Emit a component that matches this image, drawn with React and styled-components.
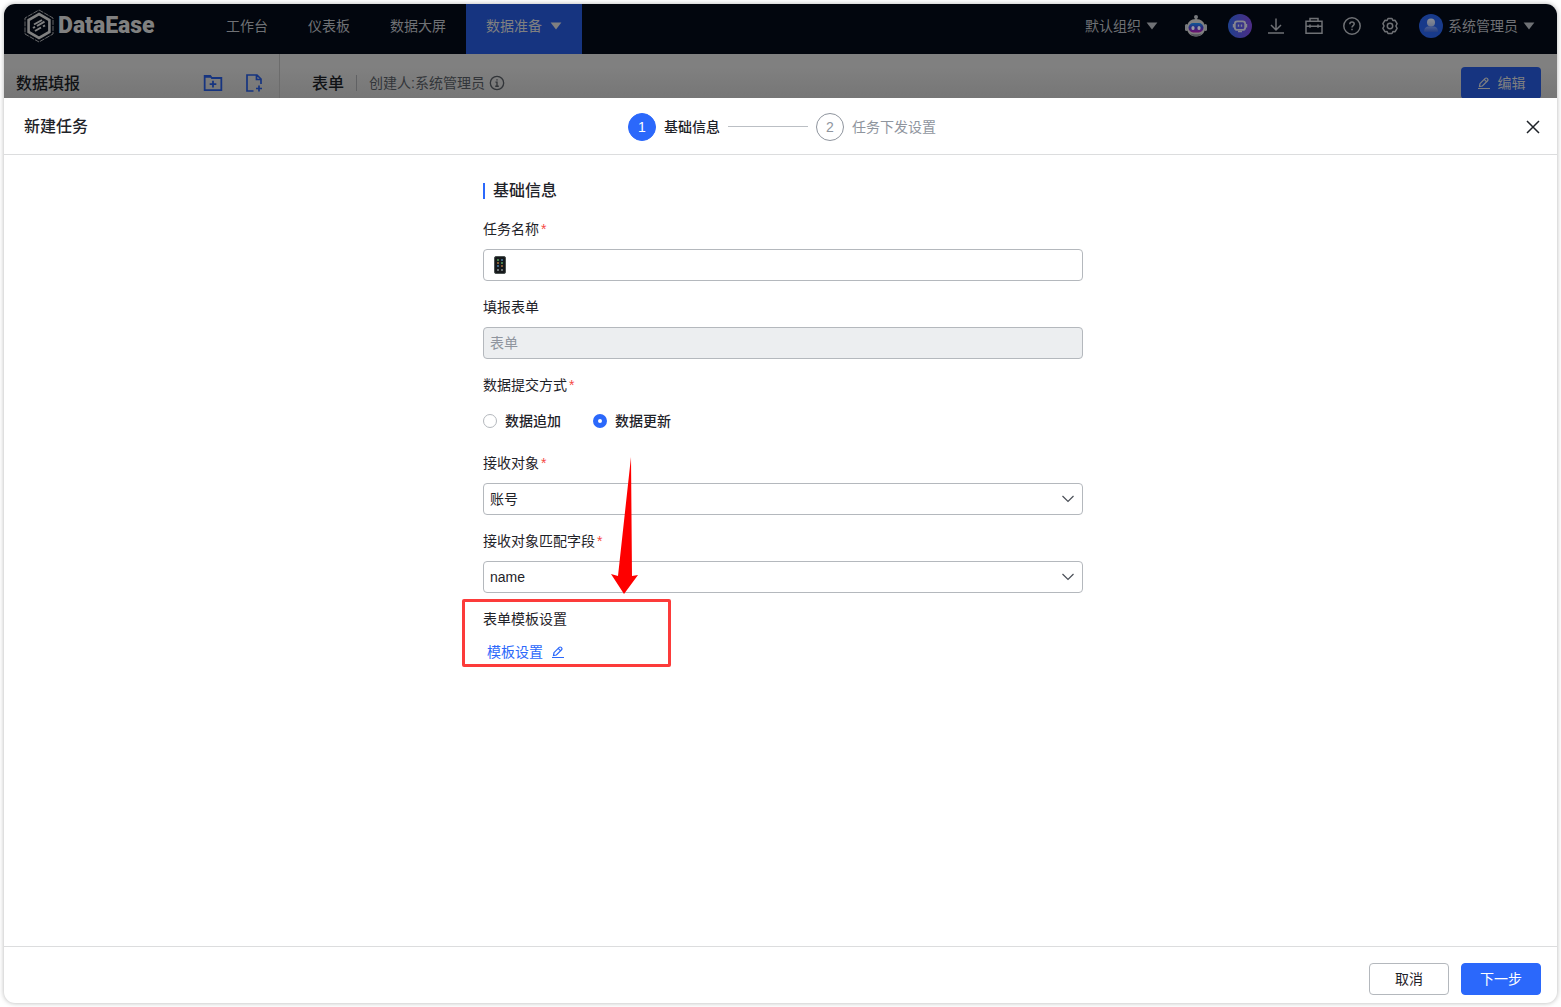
import React, { useState } from 'react';
import styled, { createGlobalStyle, css } from 'styled-components';

const GlobalStyle = createGlobalStyle`
  * {
    box-sizing: border-box;
  }

  body {
    margin: 0;
    background: #fff;
    color: #1f2329;
    font-family: 'Liberation Sans', 'Noto Sans CJK SC', sans-serif;
    font-size: 14px;
    line-height: 22px;
  }

  button, input, select {
    font: inherit;
    color: inherit;
  }

  svg {
    display: block;
    flex: none;
  }
`;

const Page = styled.div`
  min-height: 100vh;
  padding: 4px;
  display: flex;
`;

const Window = styled.div`
  flex: 1;
  display: flex;
  flex-direction: column;
  border-radius: 11px;
  overflow: hidden;
  background: #fff;
  box-shadow: 0 0 5px rgba(0, 0, 0, 0.3);
`;

const TopBar = styled.header`
  height: 50px;
  display: flex;
  background: #02060e;
  color: #6f7175;
`;

const Logo = styled.a`
  width: 202px;
  padding: 0 0 6px 20px;
  display: flex;
  align-items: center;
  gap: 4px;
  color: #808080;
  font-family: Roboto, sans-serif;
  font-size: 23px;
  font-weight: 900;
  text-decoration: none;
`;

const Nav = styled.nav`
  display: flex;
  flex: 1;
`;

const NavLink = styled.a`
  display: flex;
  align-items: center;
  gap: 8px;
  padding: 0 20px 6px;
  color: inherit;
  text-decoration: none;

  ${({ $active }) =>
    $active &&
    css`
      background: #163480;
      color: #808080;
    `}
`;

const Tools = styled.div`
  display: flex;
  align-items: center;
  gap: 20px;
  padding: 0 22px 6px 0;
`;

const Assistants = styled.div`
  display: flex;
  gap: 20px;
  padding-left: 6px;
  margin-right: -5px;
`;

const PlainButton = styled.button`
  display: flex;
  align-items: center;
  gap: 5px;
  padding: 0;
  border: 0;
  background: none;
  white-space: nowrap;
`;

const SubBar = styled.div`
  height: 44px;
  display: flex;
  overflow: hidden;
  background: linear-gradient(#808080, #808080 30%, #767676);
`;

const SidePanel = styled.div`
  width: 276px;
  height: 60px;
  flex: none;
  padding: 13px 16px 0 12px;
  border-right: 1px solid #6c6c6c;
  display: flex;
  align-items: flex-start;
  gap: 22px;
  color: #163480;
`;

const SideTitle = styled.h1`
  flex: 1;
  margin: 0;
  color: #101215;
  font-size: 16px;
  font-weight: 500;
  line-height: 34px;
`;

const SideButton = styled(PlainButton)`
  height: 32px;
  color: #163480;
`;

const FormBar = styled.div`
  flex: 1;
  height: 32px;
  margin-top: 13px;
  padding: 0 16px 0 32px;
  display: flex;
  align-items: center;
`;

const FormName = styled.h2`
  margin: 0;
  padding-top: 2px;
  color: #101215;
  font-size: 16px;
  font-weight: 500;
`;

const Creator = styled.div`
  flex: 1;
  display: flex;
  align-items: center;
  gap: 4px;
  margin-left: 12px;
  color: #323539;

  &::before {
    content: '';
    height: 16px;
    margin-right: 8px;
    border-left: 1px solid #606163;
  }
`;

const EditButton = styled.button`
  width: 80px;
  height: 32px;
  display: flex;
  align-items: center;
  justify-content: center;
  gap: 7px;
  padding: 0;
  border: 0;
  border-radius: 4px;
  background: #163480;
  color: #808080;
`;

const Drawer = styled.main`
  flex: 1;
  display: flex;
  flex-direction: column;
`;

const DrawerHead = styled.div`
  height: 57px;
  padding: 1px 17px 0 20px;
  border-bottom: 1px solid #dcddde;
  display: grid;
  grid-template-columns: 1fr auto 1fr;
  align-items: center;
`;

const DrawerTitle = styled.h2`
  margin: 0;
  font-size: 16px;
  font-weight: 500;
`;

const Steps = styled.ol`
  margin: 0;
  padding: 0;
  display: flex;
  align-items: center;
  gap: 8px;
  list-style: none;
`;

const Step = styled.li`
  display: flex;
  align-items: center;
  gap: 8px;
  color: ${({ $active }) => ($active ? '#1f2329' : '#8f959e')};
  font-weight: ${({ $active }) => ($active ? 500 : 400)};

  &:not(:first-child)::before {
    content: '';
    flex: none;
    width: 80px;
    border-top: 1px solid #bbbfc4;
  }
`;

const StepNumber = styled.span`
  width: 28px;
  height: 28px;
  border: 1px solid ${({ $active }) => ($active ? '#2b68fb' : '#8f959e')};
  border-radius: 50%;
  background: ${({ $active }) => ($active ? '#2b68fb' : '#fff')};
  color: ${({ $active }) => ($active ? '#fff' : '#8f959e')};
  font-weight: 400;
  line-height: 26px;
  text-align: center;
`;

const CloseButton = styled(PlainButton)`
  justify-self: end;
`;

const DrawerBody = styled.div`
  flex: 1;
  padding: 24px 0 24px 5px;
`;

const Form = styled.form`
  width: 100%;
  max-width: 600px;
  margin: 0 auto;
  display: flex;
  flex-direction: column;
  gap: 16px;
`;

const SectionTitle = styled.h3`
  margin: 0;
  display: flex;
  align-items: center;
  gap: 8px;
  font-size: 16px;
  font-weight: 500;
  line-height: 24px;

  &::before {
    content: '';
    width: 2px;
    height: 16px;
    background: #2b68fb;
  }
`;

const Field = styled.div`
  position: relative;
  display: flex;
  flex-direction: column;
  gap: 8px;
`;

const labelStyle = css`
  height: 22px;
  line-height: 20px;

  &::after {
    content: ${({ $required }) => ($required ? "'*'" : 'none')};
    margin-left: 2px;
    color: #f54a45;
  }
`;

const Label = styled.label`
  ${labelStyle}
`;

const Caption = styled.div`
  ${labelStyle}
`;

const Control = styled.div`
  position: relative;
  display: grid;

  svg {
    position: absolute;
    top: 50%;
    transform: translateY(-50%);
    pointer-events: none;
  }
`;

const boxStyle = css`
  width: 100%;
  height: 32px;
  border: 1px solid #b4b8bd;
  border-radius: 4px;
  background: #fff;
  outline: none;
`;

const Input = styled.input`
  ${boxStyle}
  padding: 0 6px 2px ${({ $withIcon }) => ($withIcon ? '24px' : '6px')};

  &:disabled {
    background: #eceef0;
    color: #8f959e;
  }
`;

const Select = styled.select`
  ${boxStyle}
  padding: 0 30px 0 6px;
  appearance: none;
`;

const PhoneIcon = styled.svg`
  left: 11px;
`;

const Chevron = styled.svg`
  right: 9px;
`;

const RadioRow = styled.div`
  height: 32px;
  display: flex;
  align-items: center;
  gap: 32px;
`;

const RadioLabel = styled.label`
  display: flex;
  align-items: center;
  gap: 8px;
  font-weight: 500;
`;

const Radio = styled.input`
  appearance: none;
  width: 14px;
  height: 14px;
  margin: 0;
  border: 1px solid #b4b8bd;
  border-radius: 50%;
  background: #fff;

  &:checked {
    border: 5px solid #2b68fb;
  }
`;

const TemplateButton = styled(PlainButton)`
  align-self: flex-start;
  gap: 8px;
  padding: 2px 4px;
  color: #2b68fb;
`;

const Highlight = styled.div`
  position: absolute;
  top: -10px;
  left: -21px;
  width: 209px;
  height: 68px;
  border: 3px solid #fc3b3a;
  border-radius: 2px;
  pointer-events: none;
`;

const Arrow = styled.svg`
  position: absolute;
  top: -152px;
  left: 128px;
  pointer-events: none;
`;

const DrawerFoot = styled.footer`
  height: 57px;
  padding: 16px 16px 0;
  border-top: 1px solid #dcddde;
  display: flex;
  justify-content: flex-end;
  gap: 12px;
`;

const FootButton = styled.button`
  width: 80px;
  height: 32px;
  padding: 0;
  border: 1px solid ${({ $primary }) => ($primary ? '#2b68fb' : '#b4b8bd')};
  border-radius: 4px;
  background: ${({ $primary }) => ($primary ? '#2b68fb' : '#fff')};
  color: ${({ $primary }) => ($primary ? '#fff' : '#1f2329')};
`;

const LogoMark = () => (
  <svg width="30" height="34" viewBox="0 0 30 34" fill="none" stroke="currentColor">
    <path d="M15 1 29 9v16l-14 8-14-8V9z" strokeWidth="0.8" strokeDasharray="5 1" />
    <path d="M15 5 25.4 11v12L15 29 4.600 23V11z" strokeWidth="2.600" />
    <path d="m10 15.500 8-4.500M9 19l2-1.200M13 17l7.500-4.300M11 22l6-3.500M19 17.500l2-1.200" strokeWidth="2" />
  </svg>
);

const Caret = ({ width = 12 }) => (
  <svg width={width} height="8" viewBox="0 0 12 8" preserveAspectRatio="none" fill="currentColor">
    <path d="M0.600 0.500h10.800L6 7.500z" />
  </svg>
);

const Robot = () => (
  <svg width="24" height="24" viewBox="0 0 24 24">
    <defs>
      <linearGradient id="visor" x1="0" y1="0" x2="0" y2="1">
        <stop offset="0" stopColor="#0c5796" />
        <stop offset="0.5" stopColor="#2c2780" />
        <stop offset="1" stopColor="#72106e" />
      </linearGradient>
    </defs>
    <path d="M12 2v5" stroke="#77797c" strokeWidth="1.600" />
    <circle cx="12" cy="3" r="2" fill="#77797c" />
    <rect x="1" y="10" width="3" height="7" rx="1.500" fill="#77797c" />
    <rect x="20" y="10" width="3" height="7" rx="1.500" fill="#77797c" />
    <path d="M3 14c0-6 4-9 9-9s9 3 9 9c0 5-4 8.500-9 8.500S3 19 3 14z" fill="#808080" />
    <path d="M6 19.500c3 1 9 1 12 0-1.500 2-3.500 3-6 3s-4.500-1-6-3z" fill="#55585f" />
    <rect x="4.500" y="9" width="15" height="9.500" rx="4.700" fill="url(#visor)" />
    <rect x="7.500" y="12" width="3" height="4" rx="1.500" fill="#9a9aa5" />
    <rect x="13.500" y="12" width="3" height="4" rx="1.500" fill="#9a9aa5" />
  </svg>
);

const Copilot = () => (
  <svg width="24" height="24" viewBox="0 0 24 24">
    <defs>
      <linearGradient id="copilot" x1="0" y1="0" x2="1" y2="0">
        <stop offset="0" stopColor="#1f3f8c" />
        <stop offset="1" stopColor="#4d2c86" />
      </linearGradient>
    </defs>
    <circle cx="12" cy="12" r="12" fill="url(#copilot)" />
    <g fill="none" stroke="#858590">
      <rect x="6.800" y="7.300" width="10.400" height="8.600" rx="2.500" strokeWidth="1.800" />
      <path d="M5.500 10v3.500M18.500 10v3.500M10.500 10.500v2.200M13.500 10.500v2.200" strokeWidth="1.400" />
      <path d="M10 17.500h4" strokeWidth="1.400" />
    </g>
  </svg>
);

const LineIcon = ({ size = 18, children }) => (
  <svg
    width={size}
    height={size}
    viewBox="0 0 18 18"
    fill="none"
    stroke="currentColor"
    strokeWidth="1.500"
  >
    {children}
  </svg>
);

const Avatar = () => (
  <svg width="24" height="24" viewBox="0 0 24 24">
    <defs>
      <linearGradient id="head" x1="0" y1="0" x2="0" y2="1">
        <stop offset="0" stopColor="#8a8d94" />
        <stop offset="1" stopColor="#69738c" />
      </linearGradient>
      <linearGradient id="torso" x1="0" y1="0" x2="0" y2="1">
        <stop offset="0" stopColor="#4c5f92" />
        <stop offset="1" stopColor="#233d81" />
      </linearGradient>
    </defs>
    <circle cx="12" cy="12" r="12" fill="#183a8a" />
    <path d="M5 18c0-4 2-5.500 5-5.500h4c3 0 5 1.500 5 5.500z" fill="url(#torso)" />
    <circle cx="12" cy="8.500" r="4" fill="url(#head)" />
  </svg>
);

const Pencil = ({ size = 14 }) => (
  <svg
    width={size}
    height={size}
    viewBox="0 0 14 14"
    fill="none"
    stroke="currentColor"
    strokeWidth="1.200"
  >
    <path d="M3 7.600 8.200 2.400a1.400 1.400 0 0 1 2 0l.4.400a1.400 1.400 0 0 1 0 2L5.400 10l-2.900.5zM7.200 3.400l2.400 2.400M1 12.500h12" />
  </svg>
);

const ChevronDown = () => (
  <Chevron width="12" height="8" viewBox="0 0 12 8" fill="none" stroke="#4a4f57" strokeWidth="1.200">
    <path d="M0.500 1 6 6.500 11.500 1" />
  </Chevron>
);

const navItems = ['工作台', '仪表板', '数据大屏'];

const App = () => {
  const [mode, setMode] = useState('update');

  return (
    <>
      <GlobalStyle />
      <Page>
        <Window>
          <TopBar>
            <Logo href="#">
              <LogoMark />
              DataEase
            </Logo>
            <Nav>
              {navItems.map((item) => (
                <NavLink href="#" key={item}>
                  {item}
                </NavLink>
              ))}
              <NavLink href="#" $active>
                数据准备
                <Caret />
              </NavLink>
            </Nav>
            <Tools>
              <PlainButton>
                默认组织
                <Caret />
              </PlainButton>
              <Assistants>
                <PlainButton aria-label="智能助手">
                  <Robot />
                </PlainButton>
                <PlainButton aria-label="Copilot">
                  <Copilot />
                </PlainButton>
              </Assistants>
              <PlainButton aria-label="下载">
                <LineIcon>
                  <path d="M9 1.500v11M4 8l5 5 5-5M1 16h16" />
                </LineIcon>
              </PlainButton>
              <PlainButton aria-label="工具箱">
                <LineIcon>
                  <path d="M1 4.300h16v12H1zM5 4V1.500h8V4M1 9.200h16M5 7.500v3.200M13 7.500v3.200" />
                </LineIcon>
              </PlainButton>
              <PlainButton aria-label="帮助">
                <LineIcon>
                  <circle cx="9" cy="9" r="8.200" />
                  <path d="M6.800 7.200c0-1.300 1-2.200 2.200-2.200s2.200.9 2.200 2c0 1.600-2.200 1.700-2.200 3.500M9 11.800v1.500" />
                </LineIcon>
              </PlainButton>
              <PlainButton aria-label="设置">
                <LineIcon>
                  <path d="M7 1.500h4l.9 2 2.200-.2 2 3.400L14.900 9l1.200 2.300-2 3.400-2.200-.2-.9 2H7l-.9-2-2.200.2-2-3.400L3.100 9 1.900 6.700l2-3.400 2.200.2z" strokeLinejoin="round" />
                  <circle cx="9" cy="9" r="2.700" />
                </LineIcon>
              </PlainButton>
              <PlainButton>
                <Avatar />
                系统管理员
                <Caret />
              </PlainButton>
            </Tools>
          </TopBar>

          <SubBar>
            <SidePanel>
              <SideTitle>数据填报</SideTitle>
              <SideButton aria-label="新建文件夹">
                <LineIcon size={20}>
                  <path d="M1.500 15.500v-13h5l1.500 2h8.500v11zM9 7v6M6 10h6M2 3.500h5" strokeWidth="1.600" />
                </LineIcon>
              </SideButton>
              <SideButton aria-label="新建表单">
                <LineIcon>
                  <path d="M8.500 17H2V1h10l4 4v5M11.500 1v4.500H16M14 11.500v6M11 14.500h6" strokeWidth="1.700" />
                </LineIcon>
              </SideButton>
            </SidePanel>
            <FormBar>
              <FormName>表单</FormName>
              <Creator>
                <span>创建人:系统管理员</span>
                <LineIcon size={16}>
                  <circle cx="9" cy="9" r="7.500" />
                  <path d="M7.300 8H9v4.500M7 12.700h4M9 4.700v1.600" />
                </LineIcon>
              </Creator>
              <EditButton>
                <Pencil />
                编辑
              </EditButton>
            </FormBar>
          </SubBar>

          <Drawer>
            <DrawerHead>
              <DrawerTitle>新建任务</DrawerTitle>
              <Steps>
                <Step $active>
                  <StepNumber $active>1</StepNumber>
                  基础信息
                </Step>
                <Step>
                  <StepNumber>2</StepNumber>
                  任务下发设置
                </Step>
              </Steps>
              <CloseButton aria-label="关闭">
                <svg width="14" height="14" viewBox="0 0 14 14" stroke="currentColor" strokeWidth="1.500">
                  <path d="m1 1 12 12M13 1 1 13" />
                </svg>
              </CloseButton>
            </DrawerHead>

            <DrawerBody>
              <Form onSubmit={(e) => e.preventDefault()}>
                <SectionTitle>基础信息</SectionTitle>
                <Field>
                  <Label htmlFor="task" $required>任务名称</Label>
                  <Control>
                    <Input id="task" $withIcon />
                    <PhoneIcon width="12" height="18" viewBox="0 0 12 18">
                      <rect x="0.500" y="0.500" width="11" height="17" rx="1.500" fill="#15181b" stroke="#4b5250" />
                      <path d="M3 4h2M7 7h2" stroke="#57a05c" strokeWidth="1.500" />
                      <path d="M7 4h2M3 10h2" stroke="#4d7fa8" strokeWidth="1.500" />
                      <path d="M3 7h2M7 10h2" stroke="#a8703f" strokeWidth="1.500" />
                      <path d="M3 14h2M7 14h2" stroke="#8b9294" strokeWidth="1.500" />
                    </PhoneIcon>
                  </Control>
                </Field>
                <Field>
                  <Label htmlFor="form">填报表单</Label>
                  <Input id="form" value="表单" disabled readOnly />
                </Field>
                <Field role="radiogroup" aria-labelledby="mode">
                  <Caption id="mode" $required>数据提交方式</Caption>
                  <RadioRow>
                    <RadioLabel>
                      <Radio
                        type="radio"
                        name="mode"
                        checked={mode === 'append'}
                        onChange={() => setMode('append')}
                      />
                      数据追加
                    </RadioLabel>
                    <RadioLabel>
                      <Radio
                        type="radio"
                        name="mode"
                        checked={mode === 'update'}
                        onChange={() => setMode('update')}
                      />
                      数据更新
                    </RadioLabel>
                  </RadioRow>
                </Field>
                <Field>
                  <Label htmlFor="target" $required>接收对象</Label>
                  <Control>
                    <Select id="target">
                      <option>账号</option>
                    </Select>
                    <ChevronDown />
                  </Control>
                </Field>
                <Field>
                  <Label htmlFor="column" $required>接收对象匹配字段</Label>
                  <Control>
                    <Select id="column">
                      <option>name</option>
                    </Select>
                    <ChevronDown />
                  </Control>
                </Field>
                <Field>
                  <Caption>表单模板设置</Caption>
                  <TemplateButton type="button">
                    模板设置
                    <Pencil />
                  </TemplateButton>
                  <Highlight />
                  <Arrow width="28" height="138" viewBox="0 0 28 138">
                    <path d="M20 0 21 119l6-1L13 137 0 117l7 2z" fill="#fe0000" />
                  </Arrow>
                </Field>
              </Form>
            </DrawerBody>

            <DrawerFoot>
              <FootButton>取消</FootButton>
              <FootButton $primary>下一步</FootButton>
            </DrawerFoot>
          </Drawer>
        </Window>
      </Page>
    </>
  );
};

export default App;
